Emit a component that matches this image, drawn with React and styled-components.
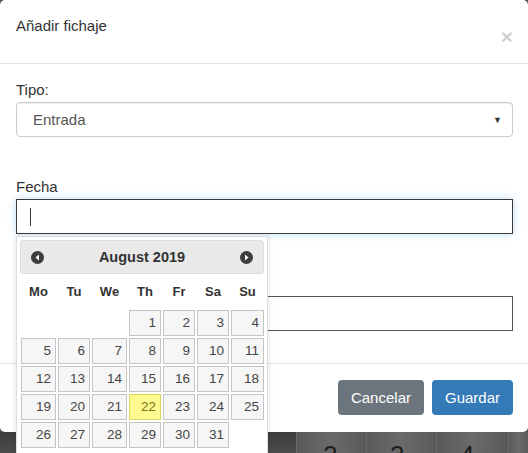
import React from 'react';
import styled, { createGlobalStyle } from 'styled-components';

const GlobalStyle = createGlobalStyle`
  html, body {
    margin: 0;
    padding: 0;
    background: #4f4f4f;
    overflow: hidden;
  }
  * {
    box-sizing: border-box;
  }
`;

const Page = styled.div`
  position: relative;
  width: 528px;
  height: 453px;
  overflow: hidden;
  font-family: "Liberation Sans", Arial, sans-serif;
  color: #333;
  display: flex;
  flex-direction: column;
`;

const Modal = styled.div`
  height: 432px;
  flex-shrink: 0;
  background: #fff;
  border-radius: 5px;
  display: flex;
  flex-direction: column;
`;

const Header = styled.div`
  height: 64px;
  padding: 15px 16px 0 16px;
  border-bottom: 1px solid #e5e5e5;
  display: flex;
  justify-content: space-between;
  align-items: flex-start;
`;

const Title = styled.h4`
  margin: 0;
  font-size: 15px;
  font-weight: normal;
  line-height: 21px;
  color: #333;
`;

const Close = styled.span`
  margin-top: 11px;
  margin-right: -1px;
  font-size: 21px;
  font-weight: bold;
  line-height: 21px;
  color: #000;
  opacity: 0.18;
`;

const Body = styled.div`
  padding: 15px 15px 32px 16px;
  display: flex;
  flex-direction: column;
  gap: 39px;
  border-bottom: 1px solid #e5e5e5;
`;

const Group = styled.div`
  display: flex;
  flex-direction: column;
`;

const Label = styled.label`
  font-size: 15px;
  line-height: 21px;
  min-height: 21px;
  margin-bottom: 2px;
  color: #333;
`;

const Select = styled.div`
  height: 35px;
  border: 1px solid #ccc;
  border-radius: 4px;
  box-shadow: inset 0 1px 1px rgba(0, 0, 0, 0.075);
  padding: 0 10px 0 16px;
  display: flex;
  align-items: center;
  justify-content: space-between;
  font-size: 15px;
  color: #555;
`;

const Arrow = styled.span`
  font-size: 9px;
  color: #333;
`;

const Field = styled.div`
  height: 35px;
  border: 1px solid ${p => (p.$focus ? '#3a3a3a' : '#555')};
  box-shadow: ${p => (p.$focus ? '0 0 8px rgba(102, 175, 233, 0.45)' : 'none')};
  display: flex;
  align-items: center;
  padding-left: 13px;
`;

const Caret = styled.span`
  width: 1px;
  height: 18px;
  background: #333;
`;

const Footer = styled.div`
  flex: 1;
  padding: 16px 15px 16px 16px;
  display: flex;
  justify-content: flex-end;
  align-items: flex-start;
  gap: 8px;
`;

const Button = styled.button`
  height: 35px;
  padding: 0 13px;
  border: none;
  border-radius: 4px;
  background: ${p => p.$bg};
  color: #fff;
  font-family: "Liberation Sans", Arial, sans-serif;
  font-size: 15px;
`;

const Behind = styled.div`
  flex: 1;
  display: flex;
  background: linear-gradient(to bottom, #3c3c3c, #585858);
`;

const BehindFill = styled.div`
  flex: 1;
`;

const BehindCell = styled.div`
  width: ${p => p.$w}px;
  border-left: 1px solid #6a6a6a;
  background: linear-gradient(to right, #5a5a5a, #6a6a6a 50%, #5a5a5a);
  padding-left: ${p => p.$pl || 0}px;
  font-size: 26px;
  line-height: 26px;
  padding-top: 10px;
  color: #1e1e1e;
`;

const Picker = styled.div`
  position: absolute;
  left: 16px;
  top: 236px;
  width: 252px;
  height: 230px;
  background: #fff;
  border: 1px solid #ddd;
  box-shadow: 0 2px 6px rgba(0, 0, 0, 0.12);
  padding: 3px 3px 0 3px;
  font-family: "Liberation Sans", Arial, sans-serif;
`;

const PickerHead = styled.div`
  height: 34px;
  background: #e9e9e9;
  border: 1px solid #ddd;
  border-radius: 3px;
  display: flex;
  align-items: center;
  justify-content: space-between;
  padding: 0 10px 0 10px;
`;

const MonthTitle = styled.span`
  font-size: 14.5px;
  font-weight: bold;
  color: #333;
`;

const Weekdays = styled.div`
  height: 35px;
  display: grid;
  grid-template-columns: 35px 32px 35px 32px 32px 32px 33px;
  column-gap: 2px;
  align-items: center;
  padding-left: 1px;
`;

const Weekday = styled.span`
  text-align: center;
  font-size: 13px;
  font-weight: bold;
  color: #333;
`;

const Days = styled.div`
  display: grid;
  grid-template-columns: 35px 32px 35px 32px 32px 32px 33px;
  grid-auto-rows: 26px;
  gap: 2px;
  padding-left: 1px;
  margin-top: 1px;
`;

const Day = styled.span`
  border: 1px solid ${p => (p.$today ? '#dad55e' : '#c5c5c5')};
  background: ${p => (p.$today ? '#fffa90' : '#f6f6f6')};
  color: ${p => (p.$today ? '#777620' : '#454545')};
  font-size: 13.5px;
  text-align: right;
  padding-right: 4px;
  line-height: 24px;
`;

const NavIcon = ({ dir }) => (
  <svg width="13" height="13" viewBox="0 0 13 13">
    <circle cx="6.5" cy="6.5" r="6.5" fill="#3d3d3d" />
    {dir === 'prev' ? (
      <polygon points="8,3.5 8,9.5 4.5,6.5" fill="#fff" />
    ) : (
      <polygon points="5,3.5 5,9.5 8.5,6.5" fill="#fff" />
    )}
  </svg>
);

const weekdays = ['Mo', 'Tu', 'We', 'Th', 'Fr', 'Sa', 'Su'];
const days = [null, null, null];
for (let d = 1; d <= 31; d++) days.push(d);

export default function App() {
  return (
    <>
      <GlobalStyle />
      <Page>
        <Modal>
          <Header>
            <Title>Añadir fichaje</Title>
            <Close>×</Close>
          </Header>
          <Body>
            <Group>
              <Label>Tipo:</Label>
              <Select>
                Entrada
                <Arrow>▼</Arrow>
              </Select>
            </Group>
            <Group>
              <Label>Fecha</Label>
              <Field $focus>
                <Caret />
              </Field>
            </Group>
            <Group>
              <Label />
              <Field />
            </Group>
          </Body>
          <Footer>
            <Button $bg="#6c757d">Cancelar</Button>
            <Button $bg="#337ab7">Guardar</Button>
          </Footer>
        </Modal>
        <Behind>
          <BehindFill />
          <BehindCell $w={70} $pl={26}>2</BehindCell>
          <BehindCell $w={70} $pl={23}>3</BehindCell>
          <BehindCell $w={72} $pl={23}>4</BehindCell>
          <BehindCell $w={20} />
        </Behind>
        <Picker>
          <PickerHead>
            <NavIcon dir="prev" />
            <MonthTitle>August 2019</MonthTitle>
            <NavIcon dir="next" />
          </PickerHead>
          <Weekdays>
            {weekdays.map(w => (
              <Weekday key={w}>{w}</Weekday>
            ))}
          </Weekdays>
          <Days>
            {days.map((d, i) =>
              d ? <Day key={i} $today={d === 22}>{d}</Day> : <span key={i} />
            )}
          </Days>
        </Picker>
      </Page>
    </>
  );
}
